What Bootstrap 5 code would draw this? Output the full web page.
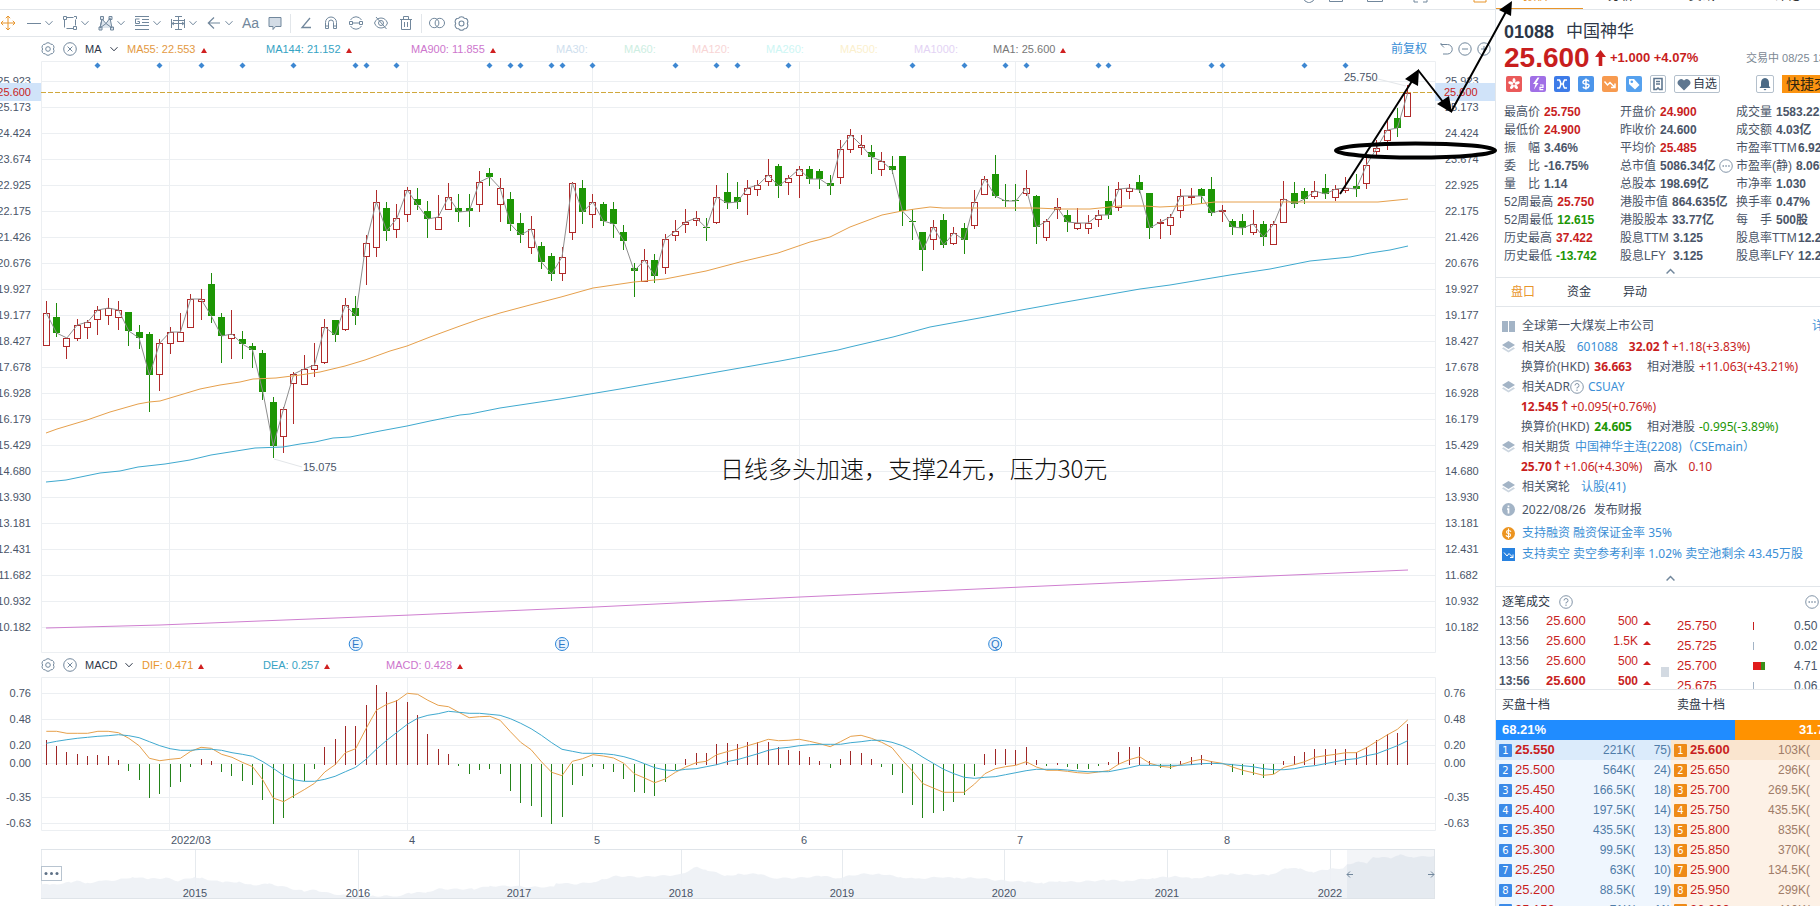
<!DOCTYPE html>
<html lang="zh-CN">
<head>
<meta charset="utf-8">
<meta name="viewport" content="width=device-width, initial-scale=1">
<title>01088 中国神华</title>
<link href="https://cdn.jsdelivr.net/npm/bootstrap@5.3.0/dist/css/bootstrap.min.css" rel="stylesheet">
<style>
:root{--ink:#4a5568;--dark:#2d3748;--up:#c81e1e;--down:#1d9605;--link:#3b8fd6;--org:#e8952b;--line:#e2e6ea;--ico:#71879c}
body{font-family:"Liberation Sans","Noto Sans CJK SC",sans-serif;font-size:12px;line-height:18px;color:var(--ink);background:#fff}
a{color:var(--link);text-decoration:none}
button{font:inherit;color:inherit;background:none;border:0;padding:0}
svg{display:block;flex:none}
.app{height:100vh;min-height:700px}
.side{width:325px;border-left:1px solid var(--line)}
.tabstrip{height:10px;border-bottom:1px solid var(--line);color:#333}
.tabrow{margin-top:-14px;line-height:18px;height:18px}
.w38{width:38px}.w40{width:40px}.w42{width:42px}.w70{width:70px}.w78{width:78px}
.sidetab{width:88px;font-size:13px;text-align:center}
.tabline{width:87px;height:1px;background:#e8952b}
.tools{height:27px;border-bottom:1px solid var(--line);color:var(--ico)}
.tools svg,.legend-row svg{fill:none;stroke:currentColor;stroke-width:1}
.move{width:26px}
.drop{width:36px;gap:3px}
.toolset{gap:9px}
.aa{font-size:14px;width:16px;height:20px}
.vsep{width:1px;height:19px;background:var(--line);margin:0 7px}
.legend-row{height:24px;font-size:11px;padding-left:41px;color:var(--ico)}
.ind{gap:8px}
.ma-name,.macd-name{padding-left:8px}
.ma-name{width:50px}.macd-name{width:65px}
.adj{font-size:12px}
.zoomset{gap:5px}
.ma-grid{display:grid;grid-template-columns:139px 145px 145px 68px 68px 74px 74px 74px 79px auto;white-space:nowrap}
.macd-grid{display:grid;grid-template-columns:121px 123px auto;white-space:nowrap}
.tri::after{content:"";display:inline-block;margin-left:5px;border:3px solid transparent;border-top:0;border-bottom:5px solid #d02020}
.plot{flex:1 1 0;min-height:300px}
.macdplot{height:172px}
.navplot{height:57px}
.plot svg,.macdplot svg,.navplot svg{width:100%;height:100%;font-size:11px}
.overlay{top:0;right:0;pointer-events:none;z-index:5}
.notewrap{left:720px;top:454px;z-index:4;font:300 24px/28px "Noto Sans CJK SC",sans-serif;color:#111;white-space:nowrap}
.more{left:41px;top:17px;width:21px;height:15px;border:1px solid #b8c4d0;background:#fff}
.up{color:var(--up)}.dn{color:var(--down)}.og{color:var(--org)}.dk{color:var(--dark)}
.head{padding:10px 0 0 8px}
.quote{padding-left:8px}
.code{font-size:18px;line-height:24px;color:var(--dark)}
.cname{font-size:17px;line-height:24px;color:var(--dark)}
.price{font-size:28px;line-height:27px;width:87px}
.chg{font-size:13px}
.stat{flex:0 0 74px;min-width:0;font-size:11px;color:#7c8894}
.ic{width:16px;height:16px;border-radius:2px}
.icons{height:18px;padding-left:10px;gap:8px}
.box{border:1px solid #b4c0cc;border-radius:2px;height:18px}
.doc{width:16px}.fav{width:46px;gap:2px}.bell{width:18px;flex:none}
.quick{background:#fb9310;color:#2d2410;font-size:14px;height:18px;line-height:18px;flex:0 0 38px;min-width:0;overflow:hidden}
.facts{display:grid;grid-template-columns:116px 116px 180px;white-space:nowrap;padding-left:8px;margin-top:10px}
.facts>div{display:flex;height:18px;align-items:center;gap:4px}
.facts>.tight{gap:0}
.l4{min-width:48px}.lt{min-width:49px}.lt5{min-width:62px}
.rule{border-bottom:1px solid var(--line)}
.fold{width:100%;padding-left:24px;display:flex;align-items:center;justify-content:center;fill:none;stroke:#71879c}
.fold-a{height:13px}.fold-b{height:23px;padding-top:6px}
.subtabs{height:29px;padding-left:15px;gap:32px}
.rel{font-family:"Noto Sans","Noto Sans CJK SC",sans-serif;white-space:nowrap;padding-top:8px}
.rel>div{display:flex;align-items:center;height:20px;padding-left:25px}
.rel>.marked{padding-left:6px}
.rel>.tall{height:22px}.rel>.taller{height:25px}
.rel .gi{width:13px;height:13px;margin-right:7px}
.more-link{margin-left:158px}
.g10{margin:0 11px}.g5{margin:0 5px}.gv{margin:0 15px 0 5px}
.help{fill:none;stroke:#8395a8}
.sub{height:29px;padding:0 1px 0 6px;gap:9px}
.depth{height:30px;padding-left:6px}
.depth span{flex:0 0 175px}
.ticks{height:74px}
.ticks table,.book{border-collapse:collapse;line-height:20px}
.ticks table{height:80px;flex:none}
.ticks .deals{width:165px;margin-top:-5px}
.ticks .dist{width:143px}
.deals .tri::after{border-width:0 4px 4px}
.ticks td,.book td{padding:0;height:20px;white-space:nowrap}
.t1{width:50px}.ticks .t1{padding-left:3px}.t4{width:23px}
.d1{width:76px}.d2{width:41px}
.ticks .px13,.book .px13{font-size:13px;color:var(--up)}
.bar{height:20px;line-height:20px;font-size:13px}
.bidpart{background:#208cff;width:240px;padding-left:6px}.askpart{background:#ff9200;width:85px;padding-left:64px}
.book{table-layout:fixed;width:350px;font-size:12px}
.c1{width:19px}.c2{width:50px}.c3{width:70px}.c4{width:36px}
.num{display:block;width:13px;height:13px;border-radius:1px;color:#fff;font:10px/13px "DejaVu Sans",sans-serif;text-align:center;margin-left:3px}
.b{background:#eff6fe;color:#4f7ca8}.a{background:#fdf1e6;color:#a07c68}
.b .num{background:#3b8ae8}.a .num{background:#ee8a17}
.best .b{background:#dbebfb}.best .a{background:#fae5cf}
.best .px13{font-weight:700}
.thumb{width:8px;height:10px;background:#d3dae2;margin:51px 8px 0 0;flex:none}
</style>
</head>
<body>
<svg width="0" height="0" class="position-absolute">
<defs>
<symbol id="chev" viewBox="0 0 8 8"><path d="M.5 2.2 4 5.8 7.5 2.2"/></symbol>
<symbol id="chevup" viewBox="0 0 8 8"><path d="M.5 5.800 4 2.200 7.500 5.800" stroke-width="1.300"/></symbol>
<symbol id="gear" viewBox="0 0 14 14"><path d="M5.2 1.2Q7 .2 8.8 1.2L9.6 2.2 11.4 2.4Q13 3.4 13 5.4L12.4 7 13 8.6Q13 10.6 11.4 11.6L9.6 11.8 8.8 12.8Q7 13.8 5.2 12.8L4.4 11.8 2.6 11.6Q1 10.6 1 8.6L1.6 7 1 5.4Q1 3.4 2.6 2.4L4.4 2.2Z"/><circle cx="7" cy="7" r="2.3"/></symbol>
<symbol id="xc" viewBox="0 0 14 14"><circle cx="7" cy="7" r="6.3"/><path d="M4.6 4.6l4.8 4.8M9.4 4.6 4.6 9.4"/></symbol>
<symbol id="ask" viewBox="0 0 14 14"><circle cx="7" cy="7" r="6.3"/><path d="M5 5.500Q5 3.500 7 3.500T9 5.500 7 7.500V8.500M7 9.500V11"/></symbol>
<symbol id="dots" viewBox="0 0 14 14"><circle cx="7" cy="7" r="6.300"/><path d="M3.500 7h1.500M6.300 7h1.500M9.200 7h1.500" stroke-width="1.500"/></symbol>
<symbol id="stack" viewBox="0 0 13 13"><path d="M6.5 0 13 4 6.5 8 0 4Z" fill="#a3b4c6"/><path d="M1.5 6.3 6.5 9.4 11.5 6.3 13 7.4 6.5 11.6 0 7.4Z" fill="#ccd6e0"/></symbol>
</defs></svg>

<div class="app d-flex overflow-hidden position-relative">
<main class="d-flex flex-column flex-grow-1 overflow-hidden">
  <nav class="tabstrip overflow-hidden"><div class="tabrow d-flex align-items-center text-nowrap">
    <a href="#" class="ps-3 me-2">01088</a><span class="ms-1 w78">中国神华 ·</span>
    <span class="og w38">日K</span><span class="w38">周K</span><span class="w42">月K</span><span class="w42">季K</span><span class="w42">年K</span><span class="w40">1分</span><span class="w40">3分</span><span class="w40">5分</span><span class="w40">10分</span><span class="w40">15分</span><span class="w38">30分</span><span class="w38">60分</span><span class="w70">更多周期</span><span>指标/叠加</span>
    <span class="ms-auto me-4">显示</span>
    <svg class="mx-2" width="16" height="16" viewBox="0 0 16 16" fill="none" stroke="#71879c"><path d="M4 1h8l3 7-3 6-4 2-4-2L1 8Z"/></svg>
    <svg class="ms-1 me-4" width="14" height="16" viewBox="0 0 14 16" fill="none" stroke="#71879c"><path d="M.5.5h13v14H.5z"/></svg>
    <svg class="me-2" width="16" height="16" viewBox="0 0 16 16" fill="none" stroke="#71879c"><path d="M.5.5h15v14H.5z"/></svg><span class="og me-3">$</span>
    <svg class="me-3" width="15" height="16" viewBox="0 0 15 16" fill="none" stroke="#71879c"><path d="M1 12v3h4M14 12v3h-4"/></svg><span class="me-2">F10</span>
    <svg class="me-2" width="14" height="16" viewBox="0 0 14 16" fill="none" stroke="#e8952b"><path d="M1 1h12v14H1z"/></svg>
  </div></nav>

  <div class="tools d-flex align-items-center" role="toolbar" aria-label="画图工具">
    <button aria-label="移动" class="og move"><svg width="16" height="16" viewBox="0 0 16 16" stroke-width="1.6"><path d="M8 1v14M1 8h14M5.8 3.2 8 1l2.2 2.2M5.8 12.8 8 15l2.2-2.2M3.2 5.8 1 8l2.2 2.2M12.8 5.8 15 8l-2.2 2.2"/></svg></button>
    <button aria-label="线段" class="drop d-flex align-items-center"><svg width="16" height="16" viewBox="0 0 16 16"><path d="M1 8.500h14"/></svg><svg width="8" height="8"><use href="#chev"/></svg></button>
    <button aria-label="形状" class="drop d-flex align-items-center"><svg width="16" height="16" viewBox="0 0 16 16"><path d="M4.500 2.500h7M2.500 4.500v8M13.500 4.500v6M4.500 13.500h7M1.500 1.500h3v3h-3zM11.500 11.500h3v3h-3zM12 1.500h2.500v2.500"/></svg><svg width="8" height="8"><use href="#chev"/></svg></button>
    <button aria-label="形态" class="drop d-flex align-items-center"><svg width="16" height="16" viewBox="0 0 16 16"><path d="M2 13 4 4l4 4.500L12 3l2 10M2 13l6-4.500 6 4.500M4 4 2 13M1 12h3v3H1zM12.500 12h3v3h-3zM2.500 1.500h3v3h-3zM11 1.500h3v3h-3z" fill="#dde5ed"/></svg><svg width="8" height="8"><use href="#chev"/></svg></button>
    <button aria-label="江恩" class="drop d-flex align-items-center"><svg width="16" height="16" viewBox="0 0 16 16"><path d="M1 1.500h14M8 4.500h7M8 7.500h7M1 10.500h14M1 14.500h14M5.500 4h-4v4.500h4V6.500H3.500"/></svg><svg width="8" height="8"><use href="#chev"/></svg></button>
    <button aria-label="测量" class="drop d-flex align-items-center"><svg width="16" height="16" viewBox="0 0 16 16"><path d="M8.500 1v14M5 1.500h7M5 14.500h7M1.500 4v9M14.500 4v9M1.500 8.500h13M3 5.500h11M4 7 2 8.500 4 10M12 7l2 1.500-2 1.500"/></svg><svg width="8" height="8"><use href="#chev"/></svg></button>
    <button aria-label="箭头" class="drop d-flex align-items-center"><svg width="16" height="16" viewBox="0 0 16 16"><path d="M14 8H2M8 2.500 2.300 8 8 13.500" stroke-width="1.200"/></svg><svg width="8" height="8"><use href="#chev"/></svg></button>
    <div class="d-flex align-items-center toolset">
      <button class="aa">Aa</button>
      <button aria-label="批注"><svg width="16" height="16" viewBox="0 0 16 16"><path d="M2 2.500h12v9H8.500L6 14.500v-3H2z" fill="#d3dce6"/></svg></button>
    </div><i class="vsep"></i>
    <div class="d-flex align-items-center toolset">
      <button aria-label="角度"><svg width="16" height="16" viewBox="0 0 16 16"><path d="M12 3 4 12.500h9" stroke-width="1.300"/></svg></button>
      <button aria-label="磁吸"><svg width="16" height="16" viewBox="0 0 16 16"><path d="M2.500 13.500v-6a5.500 5.500 0 0 1 11 0v6h-3v-6a2.500 2.500 0 0 0-5 0v6zM2.500 11h3M10.500 11h3"/></svg></button>
      <button aria-label="连续画图"><svg width="16" height="16" viewBox="0 0 16 16"><path d="M2.500 5A6.300 6.300 0 0 1 13.500 5M13.500 11A6.300 6.300 0 0 1 2.500 11M1.500 6.500h3v3h-3zM11.500 6.500h3v3h-3zM4.500 8h7"/></svg></button>
      <button aria-label="隐藏画图"><svg width="16" height="16" viewBox="0 0 16 16"><path d="M1.500 8Q3.500 3 8 3T14.500 8Q12.500 13 8 13T1.500 8ZM3 2l10.500 12"/><circle cx="8" cy="8" r="2.500"/></svg></button>
      <button aria-label="删除"><svg width="16" height="16" viewBox="0 0 16 16"><path d="M2 4.500h12M5.500 4.500v-3h5v3M3.500 4.500v10h9v-10M6.500 7v5M9.500 7v5"/></svg></button>
    </div><i class="vsep"></i>
    <div class="d-flex align-items-center toolset">
      <button aria-label="对比"><svg width="16" height="16" viewBox="0 0 16 16"><circle cx="5.200" cy="8" r="4.700"/><circle cx="10.800" cy="8" r="4.700"/></svg></button>
      <button aria-label="设置"><svg width="15" height="15"><use href="#gear"/></svg></button>
    </div>
  </div>

  <div class="legend-row d-flex align-items-center">
    <button aria-label="MA 设置" class="me-1"><svg width="14" height="14"><use href="#gear"/></svg></button>
    <button aria-label="移除 MA" class="ms-1"><svg width="14" height="14"><use href="#xc"/></svg></button>
    <button class="d-flex align-items-center dk ind ma-name">MA <svg width="8" height="8"><use href="#chev"/></svg></button>
    <div class="ma-grid flex-grow-1">
      <span class="tri" style="color:#e39a43">MA55: 22.553</span><span class="tri" style="color:#36a3c4">MA144: 21.152</span><span class="tri" style="color:#cd76cd">MA900: 11.855</span>
      <span style="color:#cfe0ee">MA30:</span><span style="color:#cdeee2">MA60:</span><span style="color:#f8d5d5">MA120:</span><span style="color:#cdf6f4">MA260:</span><span style="color:#fbf0cd">MA500:</span><span style="color:#e3d3f4">MA1000:</span><span class="tri" style="color:#777">MA1: 25.600</span>
    </div>
    <a href="#" class="adj me-2">前复权</a>
    <div class="d-flex zoomset ps-1 me-1">
    <button aria-label="撤销"><svg width="14" height="14" viewBox="0 0 14 14"><path d="M2 2.500h6.500a4.500 4.500 0 0 1 0 9.500H4M2 2.500 5 5.500M2 2.500V1"/></svg></button>
    <button aria-label="缩小"><svg width="14" height="14" viewBox="0 0 14 14"><circle cx="7" cy="7" r="6.200"/><path d="M4 7h6"/></svg></button>
    <button aria-label="放大"><svg width="14" height="14" viewBox="0 0 14 14"><circle cx="7" cy="7" r="6.200"/><path d="M4 7h6M7 4v6"/></svg></button>
    </div>
  </div>
  <div class="plot"><svg id="kline"></svg></div>
  <div class="legend-row d-flex align-items-center">
    <button aria-label="MACD 设置" class="me-2"><svg width="14" height="14"><use href="#gear"/></svg></button>
    <button aria-label="移除 MACD"><svg width="14" height="14"><use href="#xc"/></svg></button>
    <button class="d-flex align-items-center dk ind macd-name">MACD <svg width="8" height="8"><use href="#chev"/></svg></button>
    <div class="macd-grid"><span class="tri og">DIF: 0.471</span><span class="tri" style="color:#36a3c4">DEA: 0.257</span><span class="tri" style="color:#cd76cd">MACD: 0.428</span></div>
  </div>
  <div class="macdplot"><svg id="macd"></svg></div>
  <div class="navplot position-relative"><svg id="nav"></svg>
    <button aria-label="更多" class="more position-absolute"><svg width="19" height="13" fill="#5d7085"><circle cx="4" cy="6.500" r="1.500"/><circle cx="9.500" cy="6.500" r="1.500"/><circle cx="15" cy="6.500" r="1.500"/></svg></button>
  </div>
</main>

<aside class="side flex-shrink-0 overflow-hidden">
  <nav class="tabstrip overflow-hidden position-relative"><div class="tabrow d-flex text-nowrap">
    <span class="og sidetab">报价</span><span class="sidetab ps-2">分析</span><span class="sidetab ps-2">资讯</span><span class="sidetab ps-3">评论</span></div>
    <i class="position-absolute bottom-0 start-0 tabline"></i></nav>

  <div class="d-flex head"><b class="code">01088</b><span class="cname ps-2 ms-1">中国神华</span></div>
  <div class="d-flex align-items-center up text-nowrap quote"><b class="price">25.600</b>
    <svg class="mx-1" width="11" height="18" viewBox="0 0 11 18" fill="#c81e1e"><path d="M5.500 1 11 8H7.300v9H3.700V8H0Z"/></svg><b class="chg">+1.000 +4.07%</b><span class="stat ms-auto overflow-hidden">交易中 08/25 13:56</span></div>
  <div class="d-flex align-items-center icons text-nowrap mt-1">
    <svg class="ic" viewBox="0 0 16 16"><path d="M0 0h16v16H0z" fill="#ea5a5a"/><g fill="#fff"><ellipse cx="8" cy="4.600" rx="1.500" ry="2.600"/><ellipse cx="8" cy="4.600" rx="1.500" ry="2.600" transform="rotate(72 8 8)"/><ellipse cx="8" cy="4.600" rx="1.500" ry="2.600" transform="rotate(144 8 8)"/><ellipse cx="8" cy="4.600" rx="1.500" ry="2.600" transform="rotate(216 8 8)"/><ellipse cx="8" cy="4.600" rx="1.500" ry="2.600" transform="rotate(288 8 8)"/></g></svg>
    <svg class="ic" viewBox="0 0 16 16"><path d="M0 0h16v16H0z" fill="#a06fe6"/><path d="M7.500 1.500 3 8h2.500L4 13.500 8.500 7H6.200L9.500 1.500Z" fill="#fff"/><path d="M10 9h3v2.300h-3V13.700h3.300" fill="none" stroke="#fff" stroke-width="1.200"/></svg>
    <svg class="ic" viewBox="0 0 16 16"><path d="M0 0h16v16H0z" fill="#3d7be8"/><path d="M3 4h2.500Q8 8 5.500 12H3M13 4h-2.500Q8 8 10.500 12H13M6 8h4" fill="none" stroke="#fff" stroke-width="1.500"/></svg>
    <svg class="ic" viewBox="0 0 16 16"><path d="M0 0h16v16H0z" fill="#4c95ea"/><path d="M11 5.500Q10.500 4 8 4T5 6t3 2 3 2-3 2.200-3-1.500M8 2.500v11" fill="none" stroke="#fff" stroke-width="1.500"/></svg>
    <svg class="ic" viewBox="0 0 16 16"><path d="M0 0h16v16H0z" fill="#f79a4f"/><path d="M2.500 5.500 5.500 9l2.500-2.500 4.500 4.500M13 7.500V11.500H9" fill="none" stroke="#fff" stroke-width="1.500"/></svg>
    <svg class="ic" viewBox="0 0 16 16"><path d="M0 0h16v16H0z" fill="#56a1ee"/><path d="M3 3h5l5.500 6L9 13.500 3 8Z" fill="#fff"/><circle cx="5.800" cy="5.800" r="1.300" fill="#56a1ee"/></svg>
    <svg class="box doc" viewBox="0 0 14 16"><path d="M3 2.500h8v11H8.500L7 12l-1.500 1.500H3ZM5 5.500h4M5 8h4" fill="none" stroke="#5f7790" stroke-width="1.600"/></svg>
    <button class="box d-flex align-items-center justify-content-center dk fav"><svg width="14" height="13" viewBox="0 0 14 13" fill="#5f7790"><path d="M7 12.500 1.500 7A3.500 3.500 0 0 1 7 2.500 3.500 3.500 0 0 1 12.500 7Z"/></svg>自选</button>
    <button aria-label="提醒" class="box ms-auto bell"><svg width="16" height="16" viewBox="0 0 16 16" fill="#4b6a86"><path d="M8 2q4 .5 4 5v3l1.500 2h-11L4 10V7q0-4.500 4-5ZM6.500 13h3L8 14.500Z"/></svg></button>
    <button class="quick text-start ps-1">快捷交易</button>
  </div>

  <div class="facts" id="facts"></div>
  <button aria-label="收起" class="fold fold-a rule"><svg width="9" height="9"><use href="#chevup"/></svg></button>
  <div class="d-flex rule align-items-center subtabs"><a href="#" class="og">盘口</a><a href="#" class="dk">资金</a><a href="#" class="dk">异动</a></div>

  <div class="rel">
    <div class="marked tall"><svg class="gi" viewBox="0 0 13 13"><path d="M0 1h6v11H0zM7 1h6v11H7z" fill="#a3b4c6"/></svg>全球第一大煤炭上市公司<a href="#" class="more-link">详情</a></div>
    <div class="marked"><svg class="gi"><use href="#stack"/></svg>相关A股<a href="#" class="g10">601088</a><b class="up">32.02↑</b><span class="up">+1.18(+3.83%)</span></div>
    <div>换算价(HKD)<b class="up gv">36.663</b>相对港股<span class="up ms-1">+11.063(+43.21%)</span></div>
    <div class="marked"><svg class="gi"><use href="#stack"/></svg>相关ADR<svg class="help me-1" width="14" height="14"><use href="#ask"/></svg><a href="#">CSUAY</a></div>
    <div><b class="up">12.545↑</b><span class="up">+0.095(+0.76%)</span></div>
    <div>换算价(HKD)<b class="dn gv">24.605</b>相对港股<span class="dn ms-1">-0.995(-3.89%)</span></div>
    <div class="marked"><svg class="gi"><use href="#stack"/></svg>相关期货<a href="#" class="g5">中国神华主连(2208)（CSEmain）</a></div>
    <div><b class="up">25.70↑</b><span class="up">+1.06(+4.30%)</span><span class="g10">高水</span><span class="up">0.10</span></div>
    <div class="marked"><svg class="gi"><use href="#stack"/></svg>相关窝轮<a href="#" class="g10">认股(41)</a></div>
    <div class="marked taller"><svg class="gi" viewBox="0 0 13 13"><circle cx="6.500" cy="6.500" r="6.500" fill="#a3b4c6"/><path d="M6.500 2.500v1.800M5 6h1.500v4.500" stroke="#fff" stroke-width="1.700" fill="none"/></svg>2022/08/26<span class="ms-2">发布财报</span></div>
    <div class="marked tall"><svg class="gi" viewBox="0 0 13 13"><circle cx="6.500" cy="6.500" r="6.500" fill="#ec9420"/><path d="M9 4.800Q8.500 3.500 6.500 3.500T4.500 5t2 1.500 2 1.600-2 1.500-2.500-1.300M6.500 1.500v10" stroke="#fff" stroke-width="1.100" fill="none"/></svg><a href="#">支持融资 融资保证金率 35%</a></div>
    <div class="marked"><svg class="gi" viewBox="0 0 13 13"><path d="M0 0h13v13H0z" fill="#2882e0"/><path d="M2 4.500 5 8l2-2.500 4 4M11 6.500v3H8" stroke="#fff" fill="none"/></svg><a href="#">支持卖空 卖空参考利率 1.02% 卖空池剩余 43.45万股</a></div>
  </div>
  <button aria-label="收起" class="fold fold-b rule"><svg width="9" height="9"><use href="#chevup"/></svg></button>

  <div class="d-flex align-items-center dk sub">逐笔成交<svg class="help" width="14" height="14"><use href="#ask"/></svg>
    <svg class="help ms-auto" width="14" height="14"><use href="#dots"/></svg></div>
  <div class="ticks d-flex overflow-hidden rule">
    <table id="ticks" class="deals"></table>
    <i class="thumb"></i>
    <table id="dist" class="dist"></table>
  </div>
  <div class="d-flex align-items-center dk depth"><span>买盘十档</span><span>卖盘十档</span></div>
  <div class="bar d-flex fw-bold text-white"><div class="bidpart">68.21%</div><div class="askpart overflow-hidden text-nowrap">31.79%</div></div>
  <table class="book" id="book"><colgroup><col class="c1"><col class="c2"><col class="c3"><col class="c4"><col class="c1"><col class="c2"><col class="c3"><col class="c4"></colgroup></table>
</aside>

<div class="notewrap position-absolute">日线多头加速，支撑24元，压力30元</div>
<svg class="overlay position-absolute" width="500" height="240" viewBox="1320 0 500 240" fill="none" stroke="#000" stroke-width="2">
  <ellipse cx="1415.500" cy="150.500" rx="79.500" ry="7" stroke-width="4"/>
  <path d="M1340 194 1414 78M1418 70 1447 107M1451 112 1507 10"/>
  <path d="M1419 69 1405 79 1418 86ZM1452 113 1437 104 1449 96ZM1512 1 1499 10 1511 16Z" fill="#000" stroke="none"/>
</svg>
</div>

<script src="https://cdn.jsdelivr.net/npm/bootstrap@5.3.0/dist/js/bootstrap.bundle.min.js"></script>
<script>
// Candles: direction, then high, body top, body bottom and low as heights on a 592-unit pane that starts at 61
const K=`R301,313,345,345 G303,317,333,337 R338,338,346,359 R319,325,338,341 R320,322,327,339 R306,310,319,335 R298,308,315,325 R301,310,317,330 G312,312,331,346 G325,332,338,349 G332,334,375,412 R339,343,374,391 R327,332,343,354 R313,332,341,341 R294,299,327,327 R289,299,301,320 G273,284,316,323 G313,317,336,363 R310,334,338,359 G331,339,344,359 G343,346,350,368 G350,353,392,400 G397,402,446,458 R407,409,436,453 R372,374,383,424 R355,369,384,384 R343,365,369,377 R319,327,362,364 G320,320,335,342 R298,305,329,331 G296,308,316,325 R235,243,256,285 R190,202,247,257 G202,208,231,241 R204,218,229,238 R187,190,214,222 G188,199,205,210 G201,211,219,238 R195,217,229,229 R183,197,209,210 G194,208,212,222 G194,208,211,227 R171,182,204,212 G168,173,177,186 R178,188,204,222 G192,199,224,231 G213,223,235,243 R216,229,247,254 G242,246,262,269 G253,256,274,281 R247,257,273,281 R182,183,232,240 G180,188,212,224 R194,202,214,228 G202,204,221,226 G202,209,224,238 G225,232,241,250 G263,268,271,297 R249,260,281,281 G254,260,276,283 R234,239,267,274 R220,231,235,241 R209,222,224,233 R211,218,220,226 G218,227,228,241 R185,197,222,224 G173,192,203,209 G182,197,202,209 R180,188,194,215 R180,185,189,196 R159,175,181,186 G164,166,186,198 R175,178,182,195 R166,169,175,198 G166,169,179,184 G169,171,179,189 G175,183,186,195 R140,149,177,184 R129,135,149,153 R135,145,147,155 G145,152,157,174 R152,161,169,176 G156,166,170,174 G156,156,211,226 G209,221,222,240 G232,232,250,271 R220,227,239,250 G214,220,245,248 R227,233,243,245 G223,228,240,254 R190,202,225,229 R176,179,194,195 G155,174,196,198 G184,200,201,207 G184,200,201,211 R170,188,193,196 G195,196,227,244 R219,221,237,241 R198,207,209,219 G210,215,222,232 R208,223,228,230 R215,223,228,234 R210,215,219,227 G186,201,215,219 R182,189,207,211 R184,188,191,199 G175,182,190,193 G193,193,228,239 R219,222,223,239 R214,217,225,235 R189,196,210,218 R188,196,197,204 G188,189,196,203 G177,189,213,216 R205,210,211,222 G219,221,227,235 G214,221,228,235 R210,224,232,235 G221,224,237,246 R221,224,244,244 R181,199,222,223 G182,193,204,208 G188,191,199,204 R181,191,196,199 G174,188,194,199 R185,189,197,201 R177,188,190,193 G174,186,189,197 R157,165,183,189 R140,148,151,155 R120,130,140,150 G108,118,128,137 R85,93,116,116`.split(' ').map(s=>[s[0],...s.slice(1).split(',').map(Number)]);
const PRICES=['25.923','25.173','24.424','23.674','22.925','22.175','21.426','20.676','19.927','19.177','18.427','17.678','16.928','16.179','15.429','14.680','13.930','13.181','12.431','11.682','10.932','10.182'];
const MA55="46,433 57,429 87,420 110,412 138,404 149,402 160,401 180,395 200,389 220,385 240,382 253,379 276,378 300,375 320,372 345,366 365,360 390,351 407,346 430,337 460,326 480,319 500,313 530,305 561,297 593,288 600,287 634,282 665,279 706,271 740,262 778,253 810,242 830,237 850,227 882,215 902,211 915,209 930,207 943,208 1000,208 1036,208 1060,209 1090,209 1120,206 1145,206 1160,207 1180,206 1215,202 1378,202 1408,199";
const MA144="46,482 66,480 100,473 120,471 138,467 165,464 190,460 211,455 230,452 255,448 283,447 300,444 315,442 333,438 350,437 380,431 407,426 430,421 460,415 470,414 500,408 560,399 620,389 700,375 740,368 780,361 838,350 850,347 893,337 930,327 985,317 1016,311 1060,303 1100,296 1140,289 1170,285 1200,280 1230,275 1270,269 1310,261 1350,257 1370,253 1390,250 1408,246";
const MA900="46,628 160,625 285,620 411,615 595,607 800,597 1000,588 1200,579 1408,570";
const BARS=[360,377,396,403,409,405,409,421,453,480,534,522,501,486,440,417,424,456,467,483,495,540,612,594,534,483,446,381,358,319,319,255,195,216,240,247,285,343,388,403,437,462,450,446,462,513,548,557,590,612,590,494,467,440,446,456,476,516,518,527,486,450,417,400,400,373,370,373,367,367,367,381,390,393,411,424,443,417,393,400,417,440,464,518,554,594,578,572,545,525,467,402,388,388,390,381,421,437,429,440,446,446,437,427,396,381,381,423,443,446,424,411,405,424,433,455,464,464,473,462,424,409,397,388,388,388,388,397,381,361,343,340,312];
const DIF=[334,334,340,340,340,334,334,338,355,377,415,422,418,415,394,382,385,403,412,427,440,480,534,545,527,509,490,456,434,398,386,326,271,253,242,220,223,241,256,260,277,293,290,289,301,335,367,389,425,457,467,424,416,404,408,414,430,461,474,488,477,457,441,428,424,404,395,387,377,368,358,362,361,358,364,371,380,365,349,346,355,367,383,421,454,491,504,517,517,517,492,461,446,440,436,425,441,451,451,454,458,460,456,452,432,419,410,430,439,442,434,424,418,425,430,441,451,458,466,463,442,434,425,412,407,403,398,398,383,364,345,328,300];
const DEA=[370,364,359,355,352,349,347,344,347,353,365,377,386,391,391,388,388,391,398,403,409,425,445,466,479,484,484,478,469,455,442,418,388,361,337,313,295,286,281,274,277,280,280,283,286,296,310,326,346,368,388,394,400,400,401,404,410,419,431,443,450,452,448,446,440,434,425,419,410,401,391,385,382,377,374,373,373,373,368,365,361,361,367,377,392,412,430,448,461,472,475,472,470,464,458,452,448,448,448,450,453,455,455,455,449,443,436,436,436,436,436,434,431,430,431,434,437,440,446,449,449,446,440,437,431,425,419,416,407,401,389,377,362];
const AREA="41,884 51,885 71,882 77,881 87,883 103,881 118,880 127,878 134,877 148,879 166,878 178,881 194,877 202,878 214,881 225,882 239,882 253,885 269,884 281,886 293,889 304,891 316,890 328,893 340,895 375,896 397,896 411,893 427,892 439,889 474,889 490,886 514,886 526,887 554,887 556,883 577,884 593,882 604,879 616,876 640,877 655,876 679,875 697,867 707,870 727,876 738,874 758,874 774,878 798,878 821,876 837,878 861,874 881,874 900,877 916,879 940,877 956,878 980,878 995,880 1027,882 1043,883 1059,881 1074,882 1106,880 1126,881 1154,878 1177,876 1193,879 1210,876 1230,874 1270,875 1287,868 1300,869 1313,872 1330,869 1343,868 1347,864 1360,862 1367,864 1373,857 1393,858 1400,855 1413,857 1435,856";
const MONTHS=[[169,'2022/03'],[407,'4'],[592,'5'],[799,'6'],[1015,'7'],[1222,'8']];
const GRID='#eceff2',INK='#4a5568';

function pane(id,y0,h0){
  const el=document.getElementById(id),W=el.clientWidth,H=el.clientHeight;
  return {el,W,H,X:x=>x<=41?x:41+(x-41)*(W-101)/1394,Y:y=>(y-y0)*H/h0,out:''};
}
const cx=i=>46.3+i*10.314;
const n=v=>Math.round(v*10)/10;
const r=v=>Math.floor(v)+.5;
function poly(p,pts,c){p.out+=`<polyline fill="none" stroke="${c}" points="${pts.map(([x,y])=>n(p.X(x))+','+n(p.Y(y))).join(' ')}"/>`}
const parse=s=>s.split(' ').map(q=>q.split(',').map(Number));
const text=(x,y,t,c=INK,a='start')=>`<text x="${n(x)}" y="${n(y)}" fill="${c}" text-anchor="${a}">${t}</text>`;
function frame(p,top,bot,ys){
  let d='';const L=41.5,R=p.W-59.5;
  ys.concat([top,bot]).forEach(y=>d+=`M${L} ${r(p.Y(y))}H${R}`);
  MONTHS.forEach(([x])=>d+=`M${r(p.X(x))} ${r(p.Y(top))}V${r(p.Y(bot))}`);
  d+=`M${L} ${r(p.Y(top))}V${r(p.Y(bot))}M${R} ${r(p.Y(top))}V${r(p.Y(bot))}`;
  p.out+=`<path d="${d}" stroke="${GRID}" fill="none"/>`;
}
function kline(){
  const p=pane('kline',61,592),ys=PRICES.map((_,i)=>81+26*i);
  frame(p,61,652,ys);
  const R=p.W-60;
  ys.forEach((y,i)=>{p.out+=text(31,p.Y(y)+4,PRICES[i],INK,'end')+text(R+10,p.Y(y)+4,PRICES[i])});
  p.out+=`<path d="M41 ${r(p.Y(92))}H${R}" stroke="#d0a83c" stroke-dasharray="5 2"/>`;
  p.out+=`<rect x="0" y="${p.Y(83)}" width="41" height="18" fill="#d0e3f9"/><rect x="${R}" y="${p.Y(83)}" width="60" height="18" fill="#d0e3f9"/>`+text(31,p.Y(96),'25.600','#c81e1e','end')+text(R+9,p.Y(96),'25.600','#c81e1e');
  [5,11,15,19,24,30,31,34,43,45,46,49,50,53,61,65,67,72,84,89,93,95,102,103,113,114,122,126].forEach(i=>{p.out+=`<path transform="translate(${r(p.X(cx(i)))} ${p.Y(65.5)})" d="M0-3 3 0 0 3-3 0Z" fill="#3d87d2"/>`});
  K.forEach(([c,h,t,b,l],i)=>{
    const x=r(p.X(cx(i))),y=v=>Math.round(p.Y(v));
    if(c==='R')p.out+=`<path shape-rendering="crispEdges" d="M${x} ${y(h)}V${y(t)}M${x} ${y(b)}V${y(l)}M${x-3} ${y(t)+.5}h6V${Math.max(y(b),y(t)+1)+.5}h-6Z" fill="none" stroke="#b02a2a"/>`;
    else p.out+=`<path shape-rendering="crispEdges" d="M${x} ${y(h)}V${y(l)}" stroke="#1d8a0a"/><rect shape-rendering="crispEdges" x="${x-3.5}" y="${y(t)}" width="7" height="${Math.max(1,y(b)-y(t))}" fill="#1d9605"/>`;
  });
  poly(p,K.map(([c,h,t,b],i)=>[cx(i),c==='R'?t:b]),'#8e8e8e');
  poly(p,parse(MA55),'#e6a04c');poly(p,parse(MA144),'#3fa9cf');poly(p,parse(MA900),'#cf7fd0');
  p.out+=text(p.X(303),p.Y(471),'15.075')+text(p.X(1344),p.Y(81),'25.750');
  p.out+=`<path d="M${p.X(274)} ${p.Y(459)}L${p.X(302)} ${p.Y(467)}M${p.X(1378)} ${p.Y(79)}L${p.X(1406)} ${p.Y(86)}" stroke="#e3e6e9"/>`;
  [[30,'E'],[50,'E'],[92,'Q']].forEach(([i,t])=>{const x=n(p.X(cx(i)));p.out+=`<circle cx="${x}" cy="${p.Y(644)}" r="6.5" fill="#eaf4fd" stroke="#2d86d8"/>`+text(x,p.Y(644)+4,t,'#2d78c8','middle')});
  p.el.innerHTML=p.out;
}
function macd(){
  const p=pane('macd',677,172),s=v=>620+v/3,R=p.W-60;
  const g=[[693,'0.76'],[719,'0.48'],[745,'0.20'],[763,'0.00'],[797,'-0.35'],[823,'-0.63']];
  frame(p,677,830,g.map(q=>q[0]));
  g.forEach(([y,t])=>p.out+=text(31,p.Y(y)+4,t,INK,'end')+text(R+9,p.Y(y)+4,t));
  BARS.forEach((v,i)=>{if(v===433)return;p.out+=`<path shape-rendering="crispEdges" d="M${r(p.X(cx(i)))} ${p.Y(v<433?765:764)}V${n(p.Y(s(v)))}" stroke="${v<433?'#a02828':'#24831a'}"/>`});
  poly(p,DIF.map((v,i)=>[cx(i),s(v)]),'#e6a04c');poly(p,DEA.map((v,i)=>[cx(i),s(v)]),'#3fa9cf');
  MONTHS.forEach(([x,t])=>p.out+=text(p.X(x)+2,p.Y(844),t));
  p.el.innerHTML=p.out;
}
function nav(){
  const p=pane('nav',849,57),R=p.W-60,pts=[];
  const a=parse(AREA);
  for(let k=0;k<a.length-1;k++){const [x1,y1]=a[k],[x2,y2]=a[k+1];for(let x=x1;x<x2;x+=3)pts.push([x,y1+(y2-y1)*(x-x1)/(x2-x1)+Math.sin(x*1.7)*.7])}
  pts.push(a[a.length-1]);
  let g='';[195,358,519,681,842,1004,1167,1330].forEach(x=>g+=`M${r(p.X(x))} 0V49`);
  p.out+=`<path d="${g}M41.5 0V49" stroke="#e6eaee"/><polygon fill="#edf1f5" fill-opacity=".9" points="41,49 ${pts.map(([x,y])=>n(p.X(x))+','+n(p.Y(y))).join(' ')} ${R},49"/>`;
  const sx=p.X(1347);
  p.out+=`<rect x="${sx}" y="0" width="${R-sx}" height="49" fill="#b4c3d2" fill-opacity=".16"/><path d="M41 .5H${R}M41 49.500H${R}M${R-.5} 0V49" stroke="#dfe4e9"/>`;
  p.out+=`<path fill="none" stroke="#71879c" d="M${sx+6} 25.500h-6m3-3-3 3 3 3M${R-7} 25.500h6m-3-3 3 3-3 3"/>`;
  [[195,2015],[358,2016],[519,2017],[681,2018],[842,2019],[1004,2020],[1167,2021],[1330,2022]].forEach(([x,t])=>p.out+=text(p.X(x),48,t,INK,'middle'));
  p.el.innerHTML=p.out;
}
function draw(){kline();macd();nav()}
addEventListener('resize',draw);draw();

const facts=[['最高价','25.750','up'],['开盘价','24.900','up'],['成交量','1583.22万'],['最低价','24.900','up'],['昨收价','24.600'],['成交额','4.03亿'],['振　幅','3.46%'],['平均价','25.485','up'],['市盈率TTM','6.925'],['委　比','-16.75%'],['总市值','5086.34亿'],['市盈率(静)','8.065'],['量　比','1.14'],['总股本','198.69亿'],['市净率','1.030'],['52周最高','25.750','up'],['港股市值','864.635亿'],['换手率','0.47%'],['52周最低','12.615','dn'],['港股股本','33.77亿'],['每　手','500股'],['历史最高','37.422','up'],['股息TTM','3.125'],['股息率TTM','12.21%'],['历史最低','-13.742','dn'],['股息LFY','3.125'],['股息率LFY','12.21%']];
document.getElementById('facts').innerHTML=facts.map(([l,v,c])=>{
  const long=/率(LFY|TTM)/.test(l);
  const w=long?'lt5':/LFY|TTM/.test(l)?'lt':/周|史/.test(l)?'l4':'l3';
  const dots=l==='总市值'?'<svg class="help" width="14" height="14"><use href="#dots"/></svg>':'';
  return `<div class="${long?'tight':''}"><span class="${w}">${l}</span><b class="${c||''}">${v}</b>${dots}</div>`}).join('');
document.getElementById('ticks').innerHTML=['500','1.5K','500','500'].map((v,i)=>`<tr class="${i===3?'fw-bold':''}"><td class="t1">13:56</td><td class="px13">25.600</td><td class="up text-end">${v}</td><td class="tri t4"></td></tr>`).join('');
document.getElementById('dist').innerHTML=[['25.750','<rect width="1" height="8" fill="#c81e1e"/>','0.50'],['25.725','<rect width="1" height="8" fill="#a3b4c6"/>','0.02'],['25.700','<rect width="8" height="8" fill="#e01b1b"/><rect x="8" width="4" height="8" fill="#3b8f1b"/>','4.71'],['25.675','<rect width="1" height="8" fill="#a3b4c6"/>','0.06']].map(([a,b,c])=>`<tr><td class="px13 d1">${a}</td><td class="d2"><svg width="14" height="8">${b}</svg></td><td>${c}</td></tr>`).join('');
const bids=[['25.550','221K',75],['25.500','564K',24],['25.450','166.5K',18],['25.400','197.5K',14],['25.350','435.5K',13],['25.300','99.5K',13],['25.250','63K',10],['25.200','88.5K',19],['25.150','71K',11]];
const asks=[['25.600','103K'],['25.650','296K'],['25.700','269.5K'],['25.750','435.5K'],['25.800','835K'],['25.850','370K'],['25.900','134.5K'],['25.950','299K'],['26.000','410K']];
document.getElementById('book').insertAdjacentHTML('beforeend','<tbody>'+bids.map((b,i)=>`<tr class="${i?'':'best'}"><td class="b"><span class="num">${i+1}</span></td><td class="b px13">${b[0]}</td><td class="b text-end">${b[1]}(</td><td class="b text-end">${b[2]})</td><td class="a"><span class="num">${i+1}</span></td><td class="a px13">${asks[i][0]}</td><td class="a text-end">${asks[i][1]}(</td><td class="a"></td></tr>`).join('')+'</tbody>');
</script>
</body>
</html>
